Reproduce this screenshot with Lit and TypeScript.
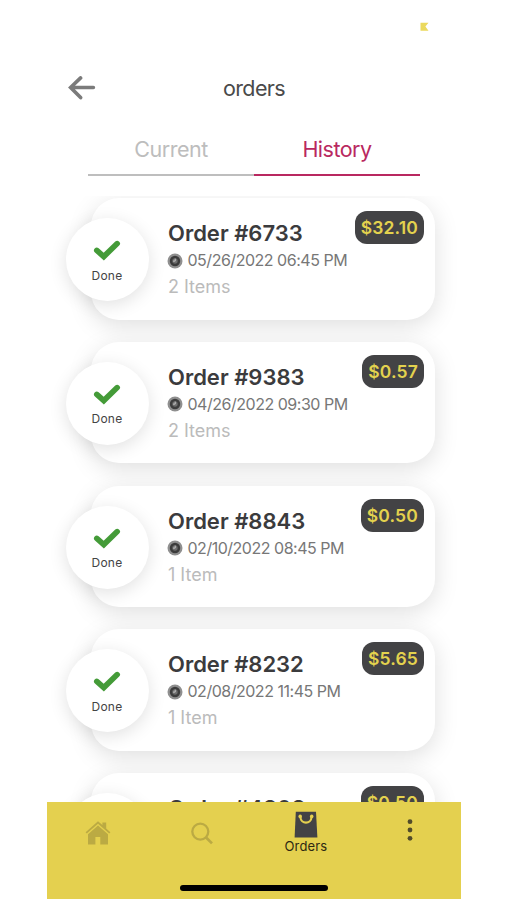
import { LitElement, html, css, svg } from "lit";
import { customElement, property } from "lit/decorators.js";

interface Order {
  id: string;
  date: string;
  items: string;
  total: string;
}

const ORDERS: Order[] = [
  { id: "6733", date: "05/26/2022 06:45 PM", items: "2 Items", total: "$32.10" },
  { id: "9383", date: "04/26/2022 09:30 PM", items: "2 Items", total: "$0.57" },
  { id: "8843", date: "02/10/2022 08:45 PM", items: "1 Item", total: "$0.50" },
  { id: "8232", date: "02/08/2022 11:45 PM", items: "1 Item", total: "$5.65" },
  { id: "4808", date: "02/08/2022 11:30 PM", items: "1 Item", total: "$0.50" },
];

const clock = svg`
  <circle cx="8" cy="8" r="7.5" fill="#8f8f8f"/>
  <circle cx="8" cy="8" r="5.2" fill="#3c3c3c"/>
  <circle cx="8" cy="8" r="2.7" fill="#6d6d6d"/>
  <path d="M8.2 5.6V8.1H6" fill="none" stroke="#c4c4c4" stroke-width="1"/>`;

@customElement("order-card")
export class OrderCard extends LitElement {
  @property({ attribute: false }) order!: Order;

  static styles = css`
    :host {
      display: block;
      flex: none;
      height: 143.8px;
    }
    .card {
      position: relative;
      box-sizing: border-box;
      height: 121.6px;
      margin-left: 44.4px;
      width: 344px;
      border-radius: 28px;
      background: #fff;
      box-shadow: 0 6px 24px rgba(0, 0, 0, 0.13);
      padding: 22px 11px 0 77px;
      display: flex;
      justify-content: space-between;
      align-items: flex-start;
    }
    .status {
      position: absolute;
      left: -24.5px;
      top: 20px;
      width: 83px;
      height: 83px;
      border-radius: 50%;
      background: #fff;
      box-shadow: 0 4px 18px rgba(0, 0, 0, 0.12);
      display: flex;
      flex-direction: column;
      align-items: center;
      box-sizing: border-box;
      padding-top: 21px;
    }
    .check {
      width: 28px;
      height: 22px;
      display: block;
      margin-left: -1.5px;
    }
    .done {
      font-size: 12px;
      line-height: 16px;
      margin-top: 6.5px;
      margin-left: -2px;
      color: #444;
      letter-spacing: 0.2px;
    }
    .info {
      white-space: nowrap;
    }
    .title {
      font-size: 22px;
      line-height: 27px;
      font-weight: 600;
      color: #3b3b3d;
    }
    .date {
      display: flex;
      align-items: center;
      gap: 4px;
      font-size: 16px;
      line-height: 27px;
      letter-spacing: -0.48px;
      color: #777;
    }
    .clock {
      width: 16px;
      height: 16px;
      flex: none;
      margin-left: -0.5px;
    }
    .items {
      font-size: 18px;
      line-height: 25px;
      color: #bbb;
    }
    .price {
      margin-top: -9px;
      height: 33px;
      line-height: 33px;
      padding: 0 6px;
      border-radius: 12px;
      background: #434345;
      color: #e3d24e;
      font-size: 17.5px;
      font-weight: 600;
      letter-spacing: 0.15px;
      white-space: nowrap;
    }
  `;

  render() {
    const o = this.order;
    return html`<div class="card">
      <div class="status">
        <svg class="check" viewBox="0 0 28 22">
          <path d="M3.8 11.4L10.8 17.6L24.2 4.6" fill="none" stroke="#449b38" stroke-width="5.6" stroke-linecap="round" stroke-linejoin="miter"/>
        </svg>
        <span class="done">Done</span>
      </div>
      <div class="info">
        <div class="title">Order #${o.id}</div>
        <div class="date"><svg class="clock" viewBox="0 0 16 16">${clock}</svg><span>${o.date}</span></div>
        <div class="items">${o.items}</div>
      </div>
      <div class="price">${o.total}</div>
    </div>`;
  }
}

@customElement("app-root")
export class AppRoot extends LitElement {
  static styles = css`
    :host {
      display: block;
      height: 900px;
      background: #fff;
      overflow: hidden;
      font-family: Inter, "Liberation Sans", sans-serif;
    }
    .screen {
      width: 414.8px;
      height: 899px;
      margin-left: 46.6px;
      display: flex;
      flex-direction: column;
    }
    .statusbar {
      flex: none;
      height: 60px;
      box-sizing: border-box;
      padding: 22px 32px 0 0;
      display: flex;
      justify-content: flex-end;
    }
    .mark {
      width: 9px;
      height: 10px;
    }
    .header {
      flex: none;
      height: 56px;
      display: grid;
      grid-template-columns: 1fr auto 1fr;
      align-items: center;
    }
    .back {
      width: 28px;
      height: 24px;
      margin-left: 21px;
      margin-top: -1px;
    }
    .heading {
      font-size: 21.5px;
      line-height: 28px;
      letter-spacing: -0.6px;
      color: #4a4a4a;
    }
    .tabs {
      flex: none;
      display: flex;
      margin: 0 41.4px;
      height: 60px;
    }
    .tab {
      flex: 1;
      box-sizing: border-box;
      padding-top: 19px;
      border-bottom: 2px solid #bebebe;
      text-align: center;
      font-size: 21.5px;
      line-height: 28px;
      letter-spacing: -0.5px;
      color: #bdbdbd;
    }
    .tab.active {
      color: #b92860;
      border-color: #b92860;
    }
    .list {
      flex: 1;
      min-height: 0;
      overflow: hidden;
      display: flex;
      flex-direction: column;
      margin: 20px -20px 0;
      padding: 2px 20px 0;
    }
    .nav {
      flex: none;
      height: 97px;
      background: #e4d04f;
      display: flex;
      flex-direction: column;
      align-items: center;
    }
    .entries {
      width: 100%;
      height: 83px;
      display: grid;
      grid-template-columns: repeat(4, 1fr);
      justify-items: center;
      align-items: start;
    }
    .entry {
      display: flex;
      flex-direction: column;
      align-items: center;
    }
    .home {
      width: 26px;
      height: 26px;
      margin-top: 18px;
    }
    .search {
      width: 24px;
      height: 24px;
      margin-top: 19px;
    }
    .bag {
      width: 24px;
      height: 27px;
      margin-top: 9px;
    }
    .dots {
      width: 6px;
      height: 24px;
      margin-top: 16px;
    }
    .label {
      font-size: 13px;
      line-height: 16px;
      letter-spacing: 0.1px;
      color: #2e2913;
    }
    .indicator {
      width: 148px;
      height: 6px;
      border-radius: 3px;
      background: #000;
    }
  `;

  render() {
    return html`<div class="screen">
      <div class="statusbar">
        <svg class="mark" viewBox="0 0 9 10"><path d="M.5 .7H8.5L5.4 4.6L8.5 8.8H.5Z" fill="#ebd95d"/></svg>
      </div>
      <div class="header">
        <svg class="back" viewBox="0 0 28 24"><path d="M25.4 11.5H3M12.6 1.9L2.6 11.5L12.6 21.6" fill="none" stroke="#7b7b7b" stroke-width="3.6" stroke-linecap="round"/></svg>
        <span class="heading">orders</span>
      </div>
      <div class="tabs">
        <div class="tab">Current</div>
        <div class="tab active">History</div>
      </div>
      <div class="list">${ORDERS.map((o) => html`<order-card .order=${o}></order-card>`)}</div>
      <div class="nav">
        <div class="entries">
          <div class="entry">
            <svg class="home" viewBox="0 0 26 26" fill="#bbaa43">
              <path d="M13 1.2L.6 12.2L1.8 13.6L13 3.8L24.2 13.6L25.4 12.2L21.2 8.4V2.4H17.4V5.1Z"/>
              <path d="M13 5.6L3 14.3V24.5H10.4V17H15.3V24.5H23V14.3Z"/>
            </svg>
          </div>
          <div class="entry">
            <svg class="search" viewBox="0 0 24 24" fill="none" stroke="#bbaa43" stroke-width="2.3">
              <circle cx="10.3" cy="10.6" r="8"/><path d="M15.8 16.2L22 22.4" stroke-width="2.7"/>
            </svg>
          </div>
          <div class="entry">
            <svg class="bag" viewBox="0 0 24 27">
              <path d="M1.8 .7H22L23.4 26.6H.6Z" fill="#434345"/>
              <path d="M6.3 5.8C7 13.6 17 13.6 17.6 5.8" fill="none" stroke="#e4d04f" stroke-width="2.1"/>
              <circle cx="6.2" cy="5.4" r="1.8" fill="#e4d04f"/><circle cx="17.7" cy="5.4" r="1.8" fill="#e4d04f"/>
            </svg>
            <span class="label">Orders</span>
          </div>
          <div class="entry">
            <svg class="dots" viewBox="0 0 6 24" fill="#514b2a"><circle cx="3" cy="3.7" r="2.4"/><circle cx="3" cy="12" r="2.4"/><circle cx="3" cy="20.3" r="2.4"/></svg>
          </div>
        </div>
        <div class="indicator"></div>
      </div>
    </div>`;
  }
}
